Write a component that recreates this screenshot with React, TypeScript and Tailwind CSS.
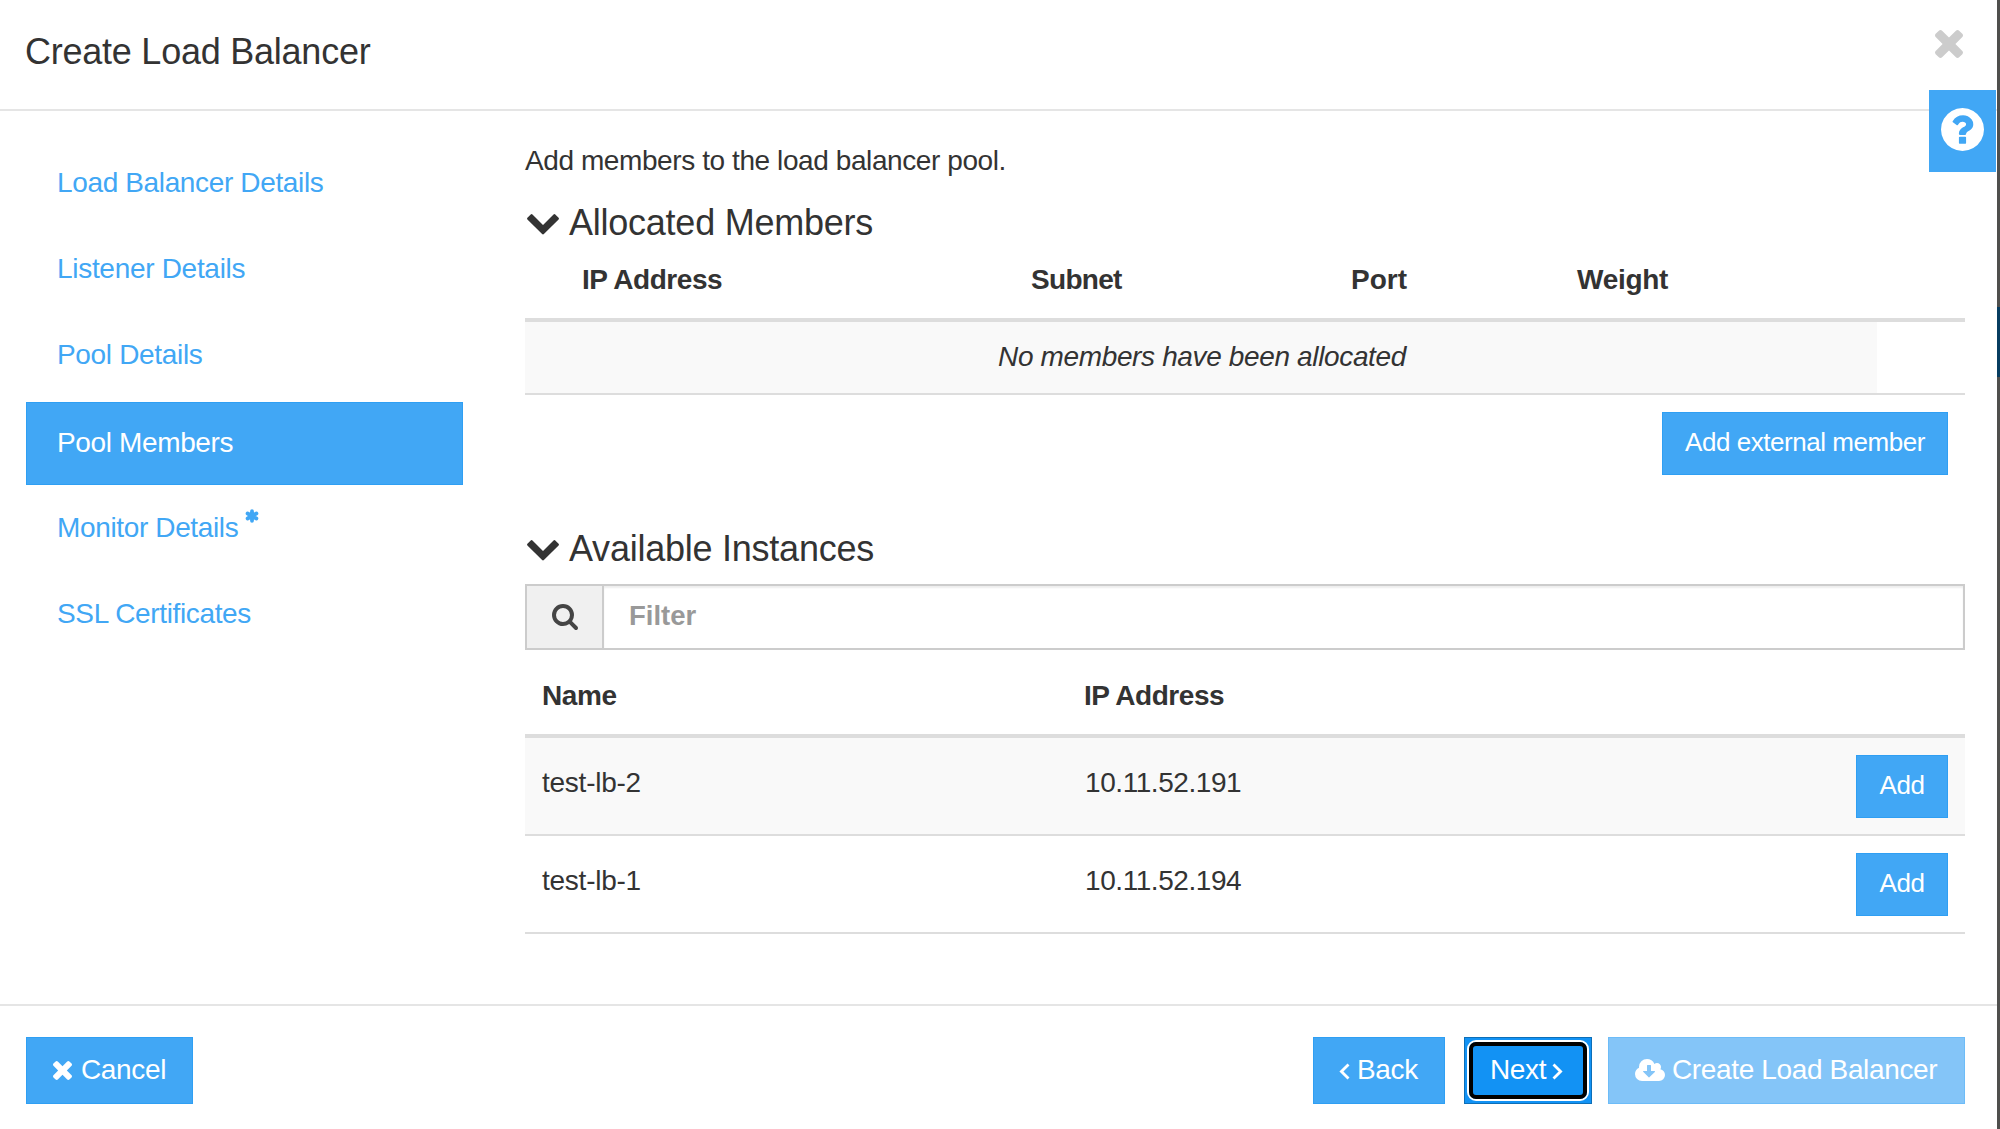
import type { ReactNode } from "react";

type IconProps = { className?: string };

const TimesIcon = ({ className }: IconProps) => (
  <svg viewBox="110 366 1188 1188" className={className} fill="currentColor">
    <path d="M1298 1322q0 40-28 68l-136 136q-28 28-68 28t-68-28l-294-294-294 294q-28 28-68 28t-68-28l-136-136q-28-28-28-68t28-68l294-294-294-294q-28-28-28-68t28-68l136-136q28-28 68-28t68 28l294 294 294-294q28-28 68-28t68 28l136 136q28 28 28 68t-28 68l-294 294 294 294q28 28 28 68z" />
  </svg>
);

const ChevronDownIcon = ({ className }: IconProps) => (
  <svg viewBox="90 533 1612 1035" className={className} fill="currentColor">
    <path d="M1683 808l-742 741q-19 19-45 19t-45-19l-742-741q-19-19-19-45.5t19-45.5l166-165q19-19 45-19t45 19l531 531 531-531q19-19 45-19t45 19l166 165q19 19 19 45.5t-19 45.5z" />
  </svg>
);

const SearchIcon = ({ className }: IconProps) => (
  <svg viewBox="64 128 1664 1664" className={className} fill="currentColor">
    <path d="M1216 832q0-185-131.5-316.5t-316.5-131.5-316.5 131.5-131.5 316.5 131.5 316.5 316.5 131.5 316.5-131.5 131.5-316.5zm512 832q0 52-38 90t-90 38q-54 0-90-38l-343-342q-179 124-399 124-143 0-273.5-55.5t-225-150-150-225-55.5-273.5 55.5-273.5 150-225 225-150 273.5-55.5 273.5 55.5 225 150 150 225 55.5 273.5q0 220-124 399l343 343q37 37 37 90z" />
  </svg>
);

const HelpIcon = ({ className }: IconProps) => (
  <svg viewBox="128 128 1536 1536" className={className} fill="currentColor">
    <path d="M1024 1376v-192q0-14-9-23t-23-9h-192q-14 0-23 9t-9 23v192q0 14 9 23t23 9h192q14 0 23-9t9-23zm256-672q0-88-55.5-163t-138.5-116-170-41q-243 0-371 213-15 24 8 42l132 100q7 6 19 6 16 0 25-12 53-68 86-92 34-24 86-24 48 0 85.5 26t37.5 59q0 38-20 61t-68 45q-63 28-115.5 86.5t-52.5 125.5v36q0 14 9 23t23 9h192q14 0 23-9t9-23q0-19 21.5-49.5t54.5-49.5q32-18 49-28.5t46-35 44.5-48 28-60.5 12.5-81zm384 192q0 209-103 385.5t-279.5 279.5-385.5 103-385.5-103-279.5-279.5-103-385.5 103-385.5 279.5-279.5 385.5-103 385.5 103 279.5 279.5 103 385.5z" />
  </svg>
);

const CloudDownloadIcon = ({ className }: IconProps) => (
  <svg viewBox="-64 128 1920 1408" className={className} fill="currentColor">
    <path d="M1216 928q0-14-9-23t-23-9h-224v-352q0-13-9.5-22.5t-22.5-9.5h-192q-13 0-22.5 9.5t-9.5 22.5v352h-224q-13 0-22.5 9.5t-9.5 22.5q0 14 9 23l352 352q9 9 23 9t23-9l351-351q10-12 10-24zm640 224q0 159-112.5 271.5t-271.5 112.5h-1088q-185 0-316.5-131.5t-131.5-316.5q0-130 70-240t188-165q-2-30-2-43 0-212 150-362t362-150q156 0 285.5 87t188.5 231q71-62 166-62 106 0 181 75t75 181q0 76-41 138 130 31 213.5 135.5t83.5 238.5z" />
  </svg>
);

const AngleIcon = ({ className }: IconProps) => (
  <svg viewBox="0 0 11 17" className={className} fill="none" stroke="currentColor" strokeWidth="2.8">
    <path d="M9.5 1.4L2.4 8.5l7.1 7.1" />
  </svg>
);

const AsteriskIcon = ({ className }: IconProps) => (
  <svg viewBox="0 0 14 14" className={className} fill="none" stroke="currentColor" strokeWidth="3.8" strokeLinecap="round">
    <path d="M7 2.2v9.6M2.6 4.5l8.8 5M11.4 4.5l-8.8 5" />
  </svg>
);

const steps = [
  { label: "Load Balancer Details", style: "h-[84px] tracking-[-0.36px]" },
  { label: "Listener Details", style: "h-[84px] tracking-[-0.3px]" },
  { label: "Pool Details", style: "h-[84px] tracking-[-0.33px]" },
  { label: "Pool Members", style: "mt-[2px] h-[83px] bg-[#41a7f5] text-white tracking-[-0.36px] border border-[#2f9ff3]", active: true },
  { label: "Monitor Details", style: "h-[84px] tracking-[-0.36px]", required: true },
  { label: "SSL Certificates", style: "h-[84px] tracking-[-0.36px]" },
];

const instances = [
  { name: "test-lb-2", ip: "10.11.52.191", row: "bg-[#f9f9f9]" },
  { name: "test-lb-1", ip: "10.11.52.194", row: "bg-white" },
];

function SectionTitle({ children, className }: { children: ReactNode; className: string }) {
  return (
    <h2 className={`flex h-10 items-center pl-[2px] text-[36px] leading-10 tracking-[-0.24px] ${className}`}>
      <ChevronDownIcon className="mt-[5px] mr-[10px] h-[20.5px] w-8" />
      <span className="pt-[2px]">{children}</span>
    </h2>
  );
}

function SmallButton({ children, className }: { children: ReactNode; className: string }) {
  return (
    <button
      className={`flex h-[63px] shrink-0 items-center justify-center border border-[#2f9ff3] bg-[#41a7f5] pb-[3px] text-[26px] leading-8 tracking-[-0.46px] text-white ${className}`}
    >
      {children}
    </button>
  );
}

export default function App() {
  return (
    <div className="flex h-[1129px] w-[2000px] overflow-hidden bg-white font-['Liberation_Sans',Arial,sans-serif] text-[28px] text-[#333]">
      <div className="relative flex w-[1997px] shrink-0 flex-col">
        <header className="flex h-[111px] shrink-0 justify-between border-b-2 border-[#e5e5e5] pr-[34px] pl-[25px]">
          <h1 className="pt-8 text-[36px] leading-10 tracking-[-0.24px]">Create Load Balancer</h1>
          <TimesIcon className="mt-[30px] h-7 w-7 text-[#ccc]" />
        </header>

        <button className="absolute top-[90px] right-px flex h-[82px] w-[67px] items-start justify-start bg-[#41a7f5] pt-[18px] pl-3 text-white">
          <HelpIcon className="h-[43px] w-[43px]" />
        </button>

        <div className="flex h-[893px] shrink-0">
          <nav className="flex w-[525px] shrink-0 flex-col gap-[2px] pt-[31px] pr-[62px] pl-[26px] text-[#41a7f5]">
            {steps.map((s) => (
              <a key={s.label} className={`flex items-center pb-[2px] ${s.active ? "pl-[30px]" : "pl-[31px]"} ${s.style}`}>
                {s.label}
                {s.required && <AsteriskIcon className="mb-[24px] ml-[7px] h-[14px] w-[14px]" />}
              </a>
            ))}
          </nav>

          <main className="flex w-[1440px] flex-col">
            <p className="mt-8 leading-9 tracking-[-0.41px]">Add members to the load balancer pool.</p>

            <SectionTitle className="mt-[23px]">Allocated Members</SectionTitle>
            <div className="grid h-20 grid-cols-[449px_320px_226px_1fr] border-b-4 border-[#ddd] pt-[19px] pl-[57px] leading-[38px] font-bold">
              <span className="tracking-[-0.46px]">IP Address</span>
              <span className="tracking-[-0.7px]">Subnet</span>
              <span>Port</span>
              <span className="tracking-[-0.28px]">Weight</span>
            </div>
            <div className="h-[73px] border-b-2 border-[#ddd]">
              <div className="flex h-full w-[1352px] items-center justify-center bg-[#f9f9f9] pb-px pl-[2px] tracking-[-0.36px] italic">
                No members have been allocated
              </div>
            </div>
            <div className="mt-[17px] mr-[17px] flex justify-end">
              <SmallButton className="w-[286px]">Add external member</SmallButton>
            </div>

            <SectionTitle className="mt-[53px]">Available Instances</SectionTitle>
            <div className="mt-4 flex h-[66px] border-2 border-[#ccc]">
              <div className="flex w-[77px] items-center justify-center border-r-2 border-[#ccc] bg-[#f0f0f0] text-[#444]">
                <SearchIcon className="h-[26px] w-[26px]" />
              </div>
              <div className="flex flex-1 items-center pb-[2px] pl-[25px] text-[27.5px] font-bold text-[#999] shadow-[inset_0_2px_2px_rgba(0,0,0,0.07)]">
                Filter
              </div>
            </div>

            <div className="grid h-[88px] grid-cols-[542px_1fr] border-b-4 border-[#ddd] pt-[27px] pl-[17px] leading-[38px] font-bold">
              <span className="tracking-[-0.4px]">Name</span>
              <span className="tracking-[-0.46px]">IP Address</span>
            </div>
            {instances.map((it) => (
              <div
                key={it.name}
                className={`grid h-[98px] grid-cols-[543px_1fr_92px] border-b-2 border-[#ddd] pr-[17px] pl-[17px] leading-9 ${it.row}`}
              >
                <span className="pt-[27px] tracking-[-0.25px]">{it.name}</span>
                <span className="pt-[27px] tracking-[-0.43px]">{it.ip}</span>
                <SmallButton className="mt-[17px] w-[92px]">Add</SmallButton>
              </div>
            ))}
          </main>
        </div>

        <footer className="flex h-[125px] shrink-0 items-start border-t-2 border-[#e5e5e5] pt-[31px] pr-8 pl-[26px] tracking-[-0.36px] text-white">
          <button className="flex h-[67px] w-[167px] items-center border border-[#2f9ff3] bg-[#41a7f5] pb-[2px] pl-[26px]">
            <TimesIcon className="mt-[2px] mr-[9px] h-[19px] w-[19px]" />
            Cancel
          </button>
          <button className="ml-auto flex h-[67px] w-[132px] items-center border border-[#2f9ff3] bg-[#41a7f5] pb-[2px] pl-[25px]">
            <AngleIcon className="mt-[3px] mr-[7px] h-[17px] w-[11px]" />
            Back
          </button>
          <button className="ml-[19px] h-[67px] w-32 border border-[#0d6fb8] bg-[#1292f4] p-[2px]">
            <span className="flex h-full w-full rounded-[9px] border-2 border-white">
              <span className="flex h-full w-full items-center rounded-[7px] border-4 border-black pb-[2px] pl-[17px]">
                Next
                <AngleIcon className="mt-[3px] ml-[6px] h-[17px] w-[11px] shrink-0 rotate-180" />
              </span>
            </span>
          </button>
          <button className="ml-4 flex h-[67px] w-[357px] items-center border border-[#6dbcf8] bg-[#84c5f8] pb-[2px] pl-[26px]">
            <CloudDownloadIcon className="mr-[7px] h-[22px] w-[30px]" />
            Create Load Balancer
          </button>
        </footer>
      </div>

      <div className="flex flex-1 flex-col bg-[#4f4f4d]">
        <div className="mt-[307px] h-[70px] bg-[#073d60]" />
      </div>
    </div>
  );
}
